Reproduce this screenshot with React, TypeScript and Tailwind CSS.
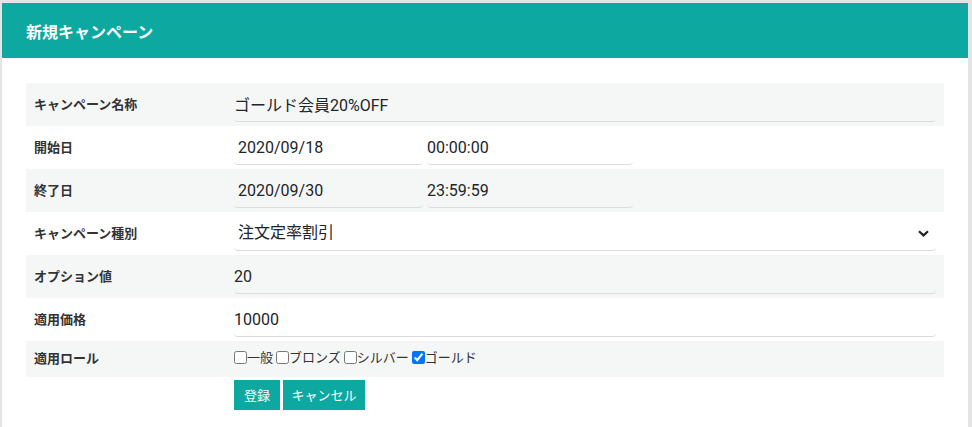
import React from 'react'

const ROWS_BG = 'bg-[#f5f7f7]'

function Row({ label, bg, children, tall = true }: { label: string; bg: boolean; children: React.ReactNode; tall?: boolean }) {
  return (
    <div className={`flex ${tall ? 'h-[43px]' : 'h-[36px]'} ${bg ? ROWS_BG : 'bg-white'}`}>
      <div className="w-[208px] shrink-0 pl-2 flex items-center text-[13px] font-bold text-[#333]">{label}</div>
      <div className="flex-1 pr-2 flex items-center">{children}</div>
    </div>
  )
}

function Field({ value, className = '' }: { value: string; className?: string }) {
  return (
    <input
      type="text"
      defaultValue={value}
      className={`h-[35px] bg-transparent border-b border-[#dcdcdc] rounded outline-none text-[16px] text-[#212529] ${className}`}
    />
  )
}

const roles = [
  { name: '一般', checked: false },
  { name: 'ブロンズ', checked: false },
  { name: 'シルバー', checked: false },
  { name: 'ゴールド', checked: true },
]

export default function App() {
  return (
    <div className="w-[972px] h-[427px] overflow-hidden bg-[#e4e4e4] pt-[3px] pl-[2px] font-['Roboto','Noto_Sans_CJK_JP',sans-serif]">
      <div className="w-[966px] h-[424px] bg-white">
        <div className="h-[55px] bg-[#0da89f] flex items-center pl-6">
          <h1 className="text-white text-[16px] font-bold font-['Noto_Sans_CJK_JP',sans-serif]">新規キャンペーン</h1>
        </div>
        <div className="pt-[25px] pl-6 pr-6">
          <Row label="キャンペーン名称" bg>
            <Field value="ゴールド会員20%OFF" className="w-full" />
          </Row>
          <Row label="開始日" bg={false}>
            <Field value="2020/09/18" className="w-[189px] pl-1 text-[#343a40]" />
            <Field value="00:00:00" className="w-[206px] ml-1" />
          </Row>
          <Row label="終了日" bg>
            <Field value="2020/09/30" className="w-[189px] pl-1 text-[#343a40]" />
            <Field value="23:59:59" className="w-[206px] ml-1" />
          </Row>
          <Row label="キャンペーン種別" bg={false}>
            <div className="relative w-full h-[35px] border-b border-[#dcdcdc] rounded flex items-center pl-1 text-[16px] text-[#212529]">
              注文定率割引
              <svg className="absolute right-[7px] top-[14px]" width="11" height="7" viewBox="0 0 11 7">
                <path d="M1 1.2 L5.5 5.4 L10 1.2" fill="none" stroke="#222" strokeWidth="2.2" />
              </svg>
            </div>
          </Row>
          <Row label="オプション値" bg>
            <Field value="20" className="w-full" />
          </Row>
          <Row label="適用価格" bg={false}>
            <Field value="10000" className="w-full" />
          </Row>
          <Row label="適用ロール" bg tall={false}>
            <div className="flex items-center text-[13px] text-[#333] font-['Noto_Sans_CJK_JP',sans-serif] -mt-1">
              {roles.map((r, i) => (
                <label key={r.name} className={`flex items-center ${i > 0 ? 'ml-[3px]' : ''}`}>
                  <input type="checkbox" defaultChecked={r.checked} className="m-0 w-[13px] h-[13px]" />
                  <span>{r.name}</span>
                </label>
              ))}
            </div>
          </Row>
          <div className="flex gap-[3px] pl-[208px] pt-[3px]">
            <button className="h-[30px] w-[46px] bg-[#0da89f] text-white text-[13px] font-['Noto_Sans_CJK_JP',sans-serif]">登録</button>
            <button className="h-[30px] w-[82px] bg-[#0da89f] text-white text-[13px] font-['Noto_Sans_CJK_JP',sans-serif]">キャンセル</button>
          </div>
        </div>
      </div>
    </div>
  )
}
